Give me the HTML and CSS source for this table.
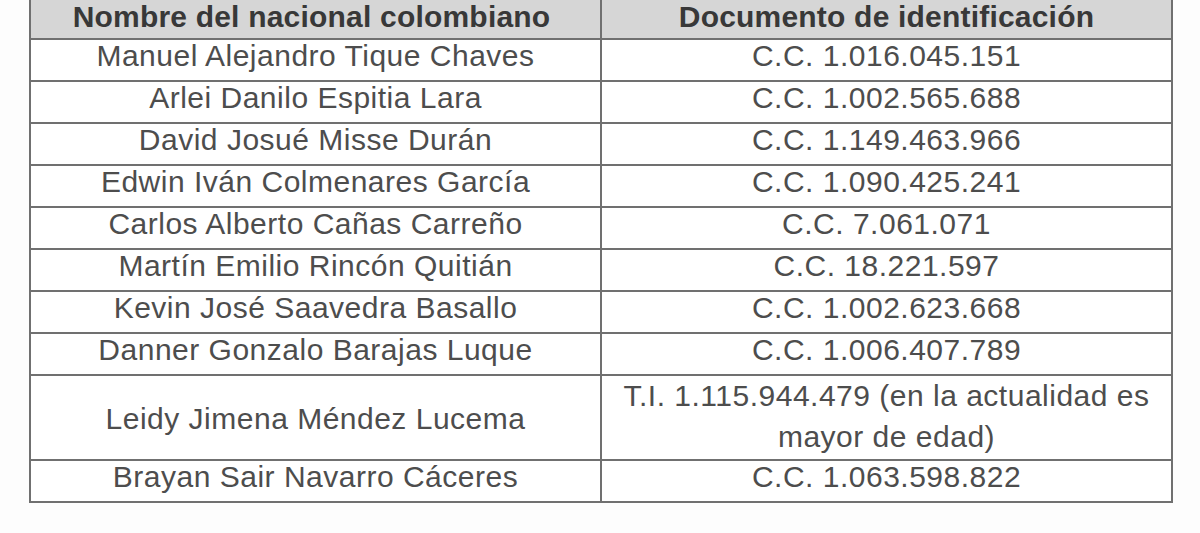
FILE: index.html
```html
<!DOCTYPE html>
<html lang="es">
<head>
<meta charset="utf-8">
<title>Nacionales colombianos</title>
<link rel="stylesheet" href="styles.css">
</head>
<body>
<table class="roster">
  <thead>
    <tr>
      <th>Nombre del nacional colombiano</th>
      <th>Documento de identificación</th>
    </tr>
  </thead>
  <tbody>
    <tr><td>Manuel Alejandro Tique Chaves</td><td>C.C. 1.016.045.151</td></tr>
    <tr><td>Arlei Danilo Espitia Lara</td><td>C.C. 1.002.565.688</td></tr>
    <tr><td>David Josué Misse Durán</td><td>C.C. 1.149.463.966</td></tr>
    <tr><td>Edwin Iván Colmenares García</td><td>C.C. 1.090.425.241</td></tr>
    <tr><td>Carlos Alberto Cañas Carreño</td><td>C.C. 7.061.071</td></tr>
    <tr><td>Martín Emilio Rincón Quitián</td><td>C.C. 18.221.597</td></tr>
    <tr><td>Kevin José Saavedra Basallo</td><td>C.C. 1.002.623.668</td></tr>
    <tr><td>Danner Gonzalo Barajas Luque</td><td>C.C. 1.006.407.789</td></tr>
    <tr class="tall"><td>Leidy Jimena Méndez Lucema</td><td>T.I. 1.115.944.479 (en la actualidad es<br>mayor de edad)</td></tr>
    <tr><td>Brayan Sair Navarro Cáceres</td><td>C.C. 1.063.598.822</td></tr>
  </tbody>
</table>
</body>
</html>
```
FILE: styles.css
```css
html, body {
  margin: 0;
  padding: 0;
  background: #fdfdfd;
}

body {
  font-family: "Liberation Sans", Arial, sans-serif;
  color: #4d4d4d;
}

.roster {
  margin-left: 29px;
  width: 1144px;
  border-collapse: collapse;
  table-layout: fixed;
  border: 2px solid #707070;
  border-top: none;
}

.roster th,
.roster td {
  border: 2px solid #707070;
  text-align: center;
  padding: 0;
}

.roster th {
  border-top: none;
  background: #d6d6d6;
  color: #383838;
  font-size: 30px;
  font-weight: bold;
  letter-spacing: 0.2px;
  line-height: 34px;
  padding-bottom: 4px;
}

.roster th:first-child {
  padding-right: 8px;
}

.roster td {
  font-size: 30px;
  letter-spacing: 0.5px;
  line-height: 32px;
  padding-bottom: 8px;
  vertical-align: middle;
  background: #ffffff;
}

.roster .tall td {
  line-height: 40.5px;
  padding-bottom: 2px;
}

.roster .tall td:first-child {
  line-height: 32px;
  padding-top: 4px;
}
```
